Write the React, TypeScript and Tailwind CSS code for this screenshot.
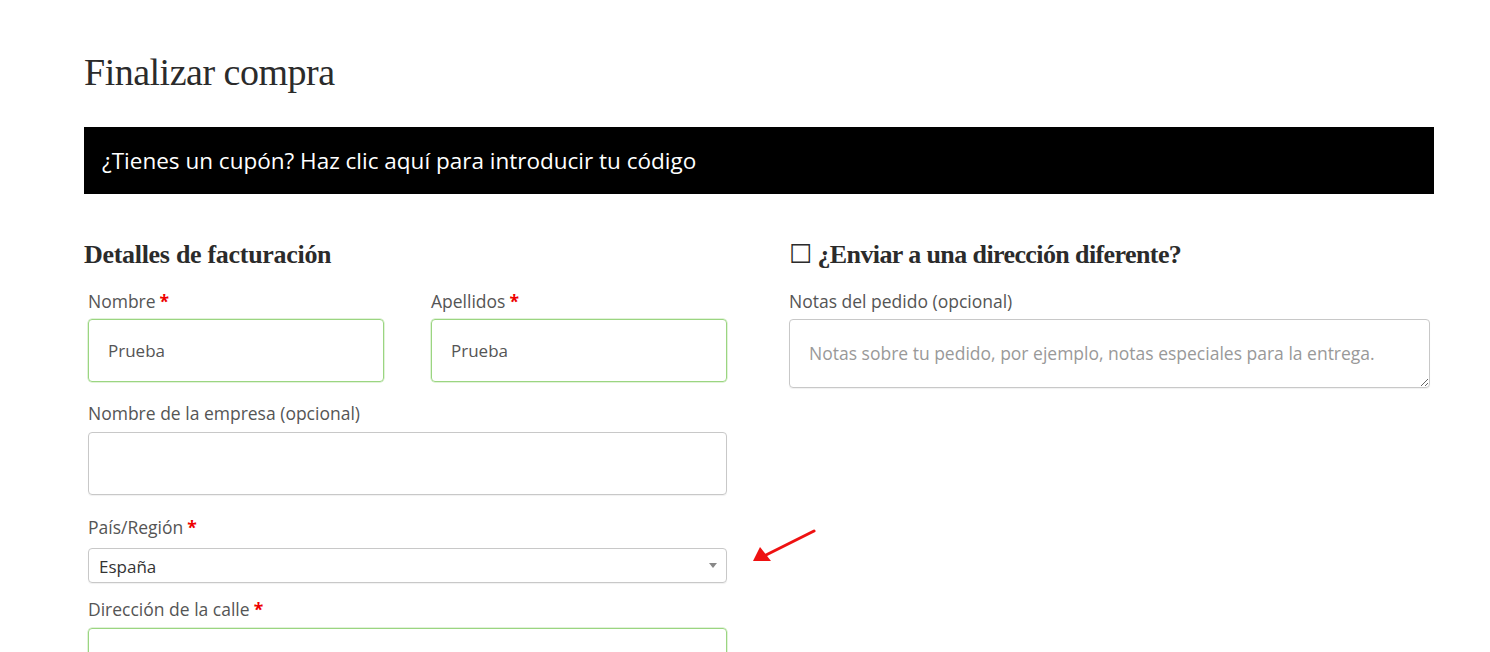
import React from 'react';

const sans = "font-['Open_Sans','Liberation_Sans',sans-serif]";
const serif = "font-['Liberation_Serif','DejaVu_Serif',serif]";

const Label = ({ text, required }: { text: string; required?: boolean }) => (
  <label className={`block text-[17.5px] leading-[24px] text-[#555] ${sans}`}>
    {text}
    {required && <span className="ml-1 font-bold text-[#e00]">*</span>}
  </label>
);

const Field = ({ value, ok }: { value?: string; ok?: boolean }) => (
  <div
    className={`h-[63px] w-full rounded-[4px] border px-[19px] flex items-center text-[17px] text-[#555] ${sans} ${
      ok ? 'border-[#9bd581] shadow-[0_0_0_0.5px_#c4e8b4]' : 'border-[#c8c8c8] shadow-[0_1px_1px_rgba(0,0,0,0.06)]'
    }`}
  >
    {value}
  </div>
);

export default function App() {
  return (
    <div className="relative min-h-[652px] w-[1490px] overflow-hidden bg-white">
      <div className="pl-[84px] pr-[56px] pt-[48px]">
        <h1 className={`text-[38px] leading-[48px] text-[#2b2b2b] tracking-[-0.5px] ${serif}`}>Finalizar compra</h1>

        {/* aviso de cupón */}
        <div className={`mt-[31px] h-[67px] bg-black flex items-center pl-[18px] text-[22.5px] text-white ${sans}`}>
          ¿Tienes un cupón? Haz clic aquí para introducir tu código
        </div>

        <div className="mt-[45px] flex gap-[59px]">
          {/* columna izquierda */}
          <div className="w-[646px]">
            <h3 className={`text-[26px] leading-[32px] font-bold text-[#2b2b2b] tracking-[-0.3px] ${serif}`}>Detalles de facturación</h3>
            <div className="mt-[18px] pl-[4px] pr-[3px]">
              <div className="flex gap-[47px]">
                <div className="w-[296px]">
                  <Label text="Nombre" required />
                  <div className="mt-[6px]">
                    <Field value="Prueba" ok />
                  </div>
                </div>
                <div className="w-[296px]">
                  <Label text="Apellidos" required />
                  <div className="mt-[6px]">
                    <Field value="Prueba" ok />
                  </div>
                </div>
              </div>

              <div className="mt-[19px]">
                <Label text="Nombre de la empresa (opcional)" />
                <div className="mt-[7px]">
                  <Field />
                </div>
              </div>

              <div className="mt-[20px]">
                <Label text="País/Región" required />
                <div
                  className={`mt-[9px] h-[35px] rounded-[4px] border border-[#c8c8c8] shadow-[0_1px_1px_rgba(0,0,0,0.06)] flex items-center justify-between pl-[10px] pr-[9px] text-[17px] text-[#333] ${sans}`}
                >
                  <span className="pt-[3px]">España</span>
                  <span className="h-0 w-0 border-x-[4px] border-t-[5px] border-x-transparent border-t-[#888]" />
                </div>
              </div>

              <div className="mt-[14px]">
                <Label text="Dirección de la calle" required />
                <div className="mt-[7px]">
                  <Field ok />
                </div>
              </div>
            </div>
          </div>

          {/* columna derecha */}
          <div className="w-[645px]">
            <h3 className={`text-[26px] leading-[32px] font-bold text-[#2b2b2b] tracking-[-0.6px] ${serif}`}>
              <span className="mr-[6px] font-normal">☐</span>¿Enviar a una dirección diferente?
            </h3>
            <div className="mt-[18px] pr-[4px]">
              <Label text="Notas del pedido (opcional)" />
              <textarea
                readOnly
                placeholder="Notas sobre tu pedido, por ejemplo, notas especiales para la entrega."
                className={`mt-[6px] block h-[69px] w-full rounded-[4px] border border-[#c8c8c8] shadow-[0_1px_1px_rgba(0,0,0,0.06)] px-[19px] pt-[21px] text-[17.5px] leading-[24px] text-[#555] placeholder:text-[#999] outline-none resize-y ${sans}`}
              />
            </div>
          </div>
        </div>
      </div>

      {/* flecha roja */}
      <svg className="absolute left-[748px] top-[526px]" width="72" height="42" viewBox="0 0 72 42">
        <line x1="66" y1="5" x2="16" y2="30" stroke="#ee1111" strokeWidth="3" strokeLinecap="round" />
        <polygon points="5,35 12,21 23,35" fill="#ee1111" />
      </svg>
    </div>
  );
}
